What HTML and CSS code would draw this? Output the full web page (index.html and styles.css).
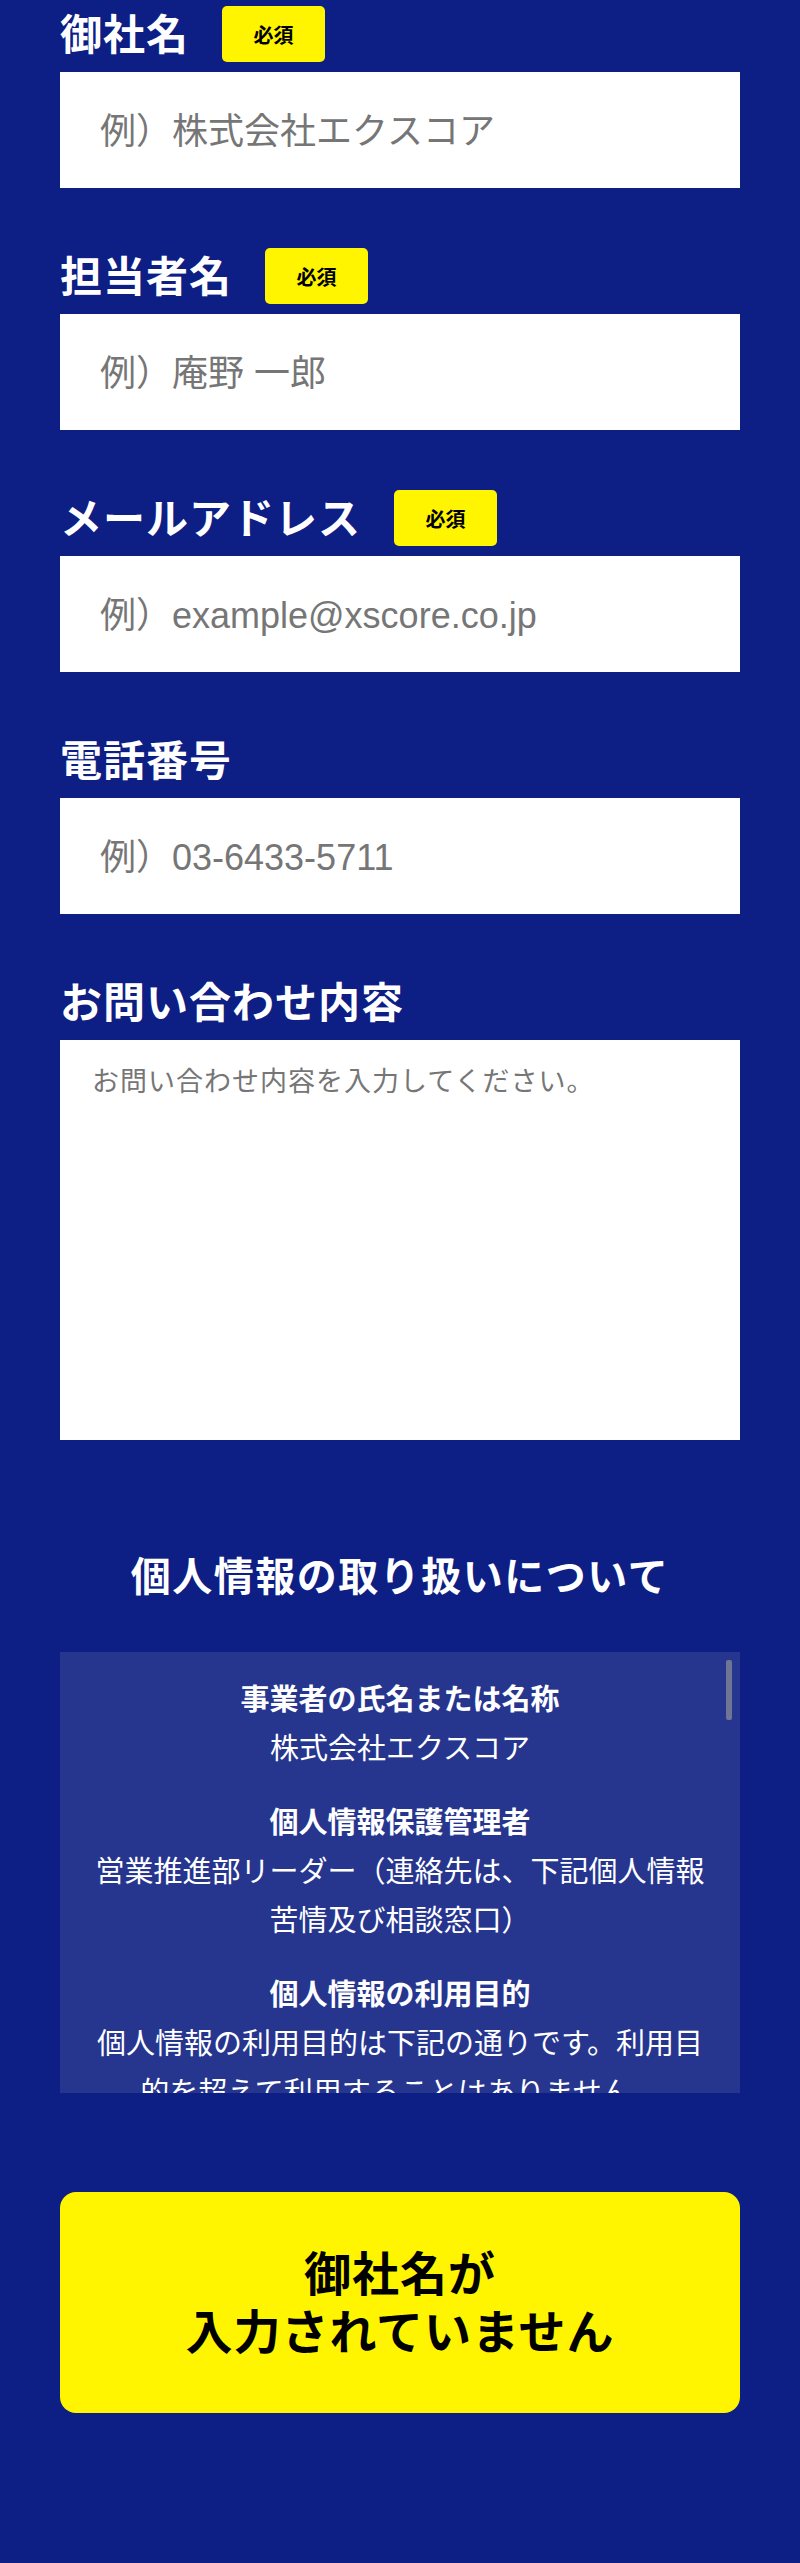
FILE: index.html
```html
<!DOCTYPE html>
<html lang="ja">
<head>
<meta charset="utf-8">
<title>お問い合わせ</title>
<link rel="stylesheet" href="styles.css">
</head>
<body>
<main class="page">
  <form class="form">
    <div class="field">
      <div class="label-row"><span class="label">御社名</span><span class="badge">必須</span></div>
      <div class="input"><span class="ph">例）株式会社エクスコア</span></div>
    </div>
    <div class="field">
      <div class="label-row"><span class="label">担当者名</span><span class="badge">必須</span></div>
      <div class="input"><span class="ph">例）庵野 一郎</span></div>
    </div>
    <div class="field">
      <div class="label-row"><span class="label">メールアドレス</span><span class="badge">必須</span></div>
      <div class="input"><span class="ph">例）example@xscore.co.jp</span></div>
    </div>
    <div class="field">
      <div class="label-row"><span class="label">電話番号</span></div>
      <div class="input"><span class="ph">例）03-6433-5711</span></div>
    </div>
    <div class="field">
      <div class="label-row"><span class="label">お問い合わせ内容</span></div>
      <div class="textarea"><span class="ph-small">お問い合わせ内容を入力してください。</span></div>
    </div>
  </form>

  <section class="privacy">
    <h2 class="privacy-title">個人情報の取り扱いについて</h2>
    <div class="privacy-box">
      <dl class="privacy-list">
        <dt>事業者の氏名または名称</dt>
        <dd>株式会社エクスコア</dd>
        <dt>個人情報保護管理者</dt>
        <dd>営業推進部リーダー（連絡先は、下記個人情報苦情及び相談窓口）</dd>
        <dt>個人情報の利用目的</dt>
        <dd>個人情報の利用目的は下記の通りです。利用目的を超えて利用することはありません。</dd>
      </dl>
      <span class="scrollbar"></span>
    </div>
  </section>

  <div class="submit">御社名が<br>入力されていません</div>
</main>
</body>
</html>
```

FILE: styles.css
```css
html, body {
  margin: 0;
  padding: 0;
}

body {
  background: #0d1e84;
  font-family: "Noto Sans CJK JP", "Noto Sans", sans-serif;
  color: #ffffff;
}

.page {
  width: 680px;
  margin: 0 auto;
  padding: 6px 0 150px;
}

.form {
  display: flex;
  flex-direction: column;
  gap: 60px;
}

.field {
  display: flex;
  flex-direction: column;
  gap: 10px;
}

.label-row {
  display: flex;
  align-items: center;
  gap: 33px;
  height: 56px;
}

.label {
  font-size: 42px;
  font-weight: 700;
  letter-spacing: 1px;
  line-height: 56px;
  padding-bottom: 5px;
  white-space: nowrap;
}

.badge {
  display: flex;
  align-items: center;
  justify-content: center;
  width: 103px;
  height: 56px;
  background: #fff500;
  color: #000000;
  border-radius: 5px;
  font-size: 20px;
  font-weight: 700;
}

.input {
  display: flex;
  align-items: center;
  height: 116px;
  box-sizing: border-box;
  padding: 0 40px 5px;
  background: #ffffff;
}

.ph {
  font-family: "Liberation Sans", "Noto Sans CJK JP", sans-serif;
  font-size: 36px;
  color: #767676;
  white-space: nowrap;
}

.textarea {
  height: 400px;
  box-sizing: border-box;
  padding: 22px 32px;
  background: #ffffff;
}

.ph-small {
  font-family: "Liberation Sans", "Noto Sans CJK JP", sans-serif;
  font-size: 27px;
  letter-spacing: 1px;
  line-height: 40px;
  color: #767676;
}

.privacy {
  margin-top: 104px;
}

.privacy-title {
  margin: 0 0 48px;
  font-size: 40px;
  font-weight: 700;
  line-height: 60px;
  letter-spacing: 1.5px;
  text-align: center;
}

.privacy-box {
  position: relative;
  height: 441px;
  box-sizing: border-box;
  padding: 20px 30px 0;
  background: #26368f;
  overflow: hidden;
}

.privacy-list {
  margin: 0;
  text-align: center;
  font-size: 29px;
}

.privacy-list dt {
  font-weight: 700;
  line-height: 50px;
}

.privacy-list dd {
  margin: 0 0 24px;
  line-height: 49px;
}

.scrollbar {
  position: absolute;
  top: 8px;
  right: 8px;
  width: 6px;
  height: 60px;
  background: #6f7695;
  border-radius: 2px;
}

.submit {
  display: flex;
  align-items: center;
  justify-content: center;
  margin-top: 99px;
  height: 221px;
  box-sizing: border-box;
  padding-bottom: 5px;
  background: #fff500;
  border-radius: 16px;
  color: #000000;
  font-size: 47px;
  font-weight: 700;
  line-height: 58px;
  letter-spacing: 1px;
  text-align: center;
}
```
